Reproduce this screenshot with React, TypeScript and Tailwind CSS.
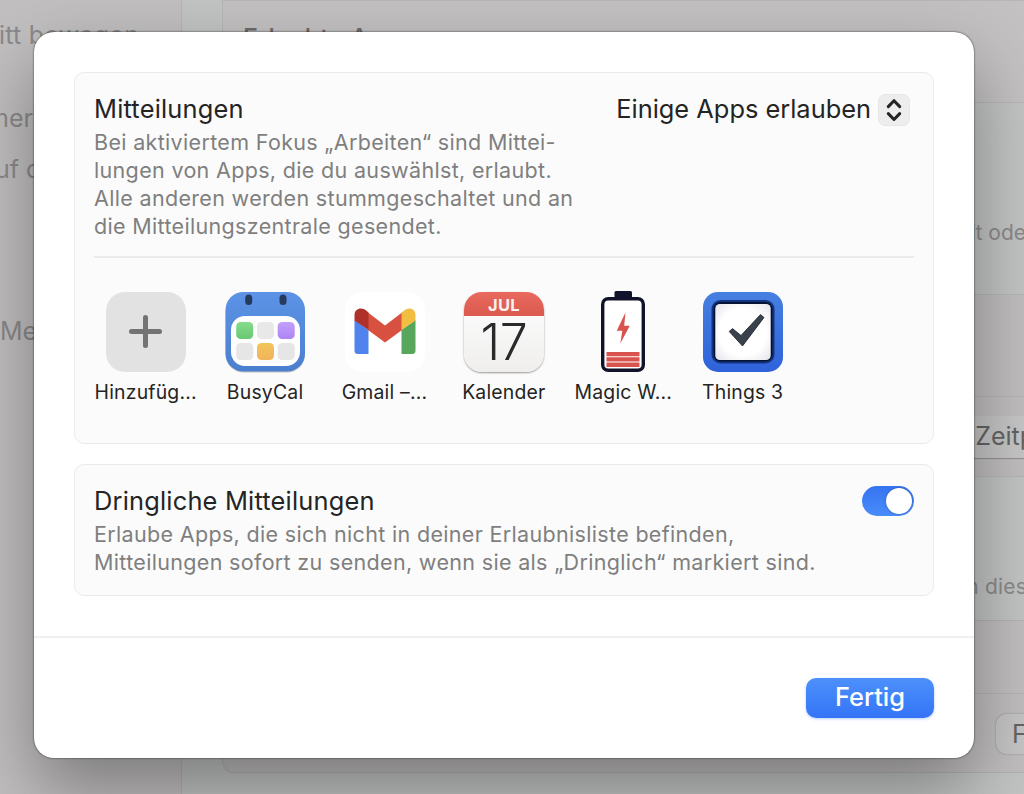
import React from "react";

function AddIcon() {
  return (
    <svg viewBox="0 0 80 80" className="h-20 w-20">
      <rect width="80" height="80" rx="19" fill="#e2e2e2" />
      <path d="M39.5 25.5v28M25.5 39.5h28" stroke="#737373" strokeWidth="5" strokeLinecap="round" />
    </svg>
  );
}

function BusyCalIcon() {
  return (
    <svg viewBox="0 0 80 80" className="h-20 w-20 overflow-visible">
      <defs>
        <linearGradient id="bc" x1="0" y1="0" x2="0" y2="1">
          <stop offset="0" stopColor="#5c93e6" />
          <stop offset="1" stopColor="#4b7fce" />
        </linearGradient>
        <linearGradient id="bg" x1="0" y1="0" x2="0" y2="1">
          <stop offset="0" stopColor="#85dc8b" />
          <stop offset="1" stopColor="#68c873" />
        </linearGradient>
        <linearGradient id="bp" x1="0" y1="0" x2="0" y2="1">
          <stop offset="0" stopColor="#c2a0fb" />
          <stop offset="1" stopColor="#ad84f4" />
        </linearGradient>
        <linearGradient id="bo" x1="0" y1="0" x2="0" y2="1">
          <stop offset="0" stopColor="#f2c558" />
          <stop offset="1" stopColor="#f0b45c" />
        </linearGradient>
      </defs>
      <rect x="0.5" y="1.5" width="79.500" height="79" rx="18" fill="#000" opacity="0.22" />
      <rect x="0.5" y="0" width="79.500" height="79.500" rx="18" fill="url(#bc)" />
      <rect x="20.2" y="2.500" width="7" height="10.500" rx="3.500" fill="#263a5e" />
      <rect x="54.500" y="2.500" width="7" height="10.500" rx="3.500" fill="#263a5e" />
      <rect x="6" y="24" width="69" height="50" rx="14" fill="#fdfdfd" />
      <rect x="11.200" y="30" width="17" height="17" rx="4.500" fill="url(#bg)" />
      <rect x="32" y="30" width="17" height="17" rx="4.500" fill="#e8e8e8" />
      <rect x="52.700" y="30" width="17" height="17" rx="4.500" fill="url(#bp)" />
      <rect x="11.200" y="51" width="17" height="17" rx="4.500" fill="#e6e6e6" />
      <rect x="32" y="51" width="17" height="17" rx="4.500" fill="url(#bo)" />
      <rect x="52.700" y="51" width="17" height="17" rx="4.500" fill="#e6e6e6" />
    </svg>
  );
}

function GmailIcon() {
  return (
    <svg viewBox="-1 0 80 80" className="h-20 w-20 overflow-visible">
      <rect width="80" height="80" rx="18" fill="#fff" />
      <path d="M9.500 28v30.500a3.500 3.500 0 0 0 3.500 3.500H23.500V38z" fill="#5083ee" />
      <path d="M70.500 28v30.500a3.500 3.500 0 0 1-3.500 3.500H56.500V38z" fill="#58a55c" />
      <path d="M23 20.500L40 33.500L57 20.500V38L40 50.500L23 38z" fill="#d85140" />
      <path d="M9.500 28.500V23C9.500 16.200 17 14.500 21.500 18.800L23.500 20.600V38z" fill="#b0302a" />
      <path d="M70.500 28.500V23C70.500 16.200 63.500 14.500 59 18.800L56.500 20.600V38z" fill="#f1be42" />
    </svg>
  );
}

function CalendarIcon() {
  return (
    <div className="flex h-20 w-20 flex-col overflow-hidden rounded-[18px] bg-linear-to-b from-white to-[#efeeed] shadow-[0_1px_2px_rgba(0,0,0,0.4)]">
      <div className="flex h-6 items-center justify-center bg-linear-to-b from-[#e8695d] to-[#dc5a4f] pt-0.5 text-[16.5px] leading-none font-bold tracking-[0.2px] text-[#f7f1f0]">
        JUL
      </div>
      <div className="flex flex-1 items-center justify-center pb-1 text-[50px] leading-[50px] font-light tracking-[-0.5px] text-[#2a2a2a]">
        17
      </div>
    </div>
  );
}

function BatteryIcon() {
  return (
    <svg viewBox="0 0 80 80" className="h-20 w-20 overflow-visible">
      <rect x="31.500" y="-1" width="17.500" height="9" rx="1.500" fill="#10132a" />
      <rect x="19.700" y="6.700" width="40.600" height="71.600" rx="5.500" fill="#fff" stroke="#10132a" strokeWidth="3.400" />
      <path d="M42.500 20.500L33.700 38.800H39.300L37.300 51.500L46.800 33.800H41.200z" fill="#d9534f" />
      <path d="M23.500 60h33v4.300h-33zM23.500 65.300h33v4.300h-33zM23.500 70.600h33v4.300h-33z" fill="#d9534f" />
    </svg>
  );
}

function ThingsIcon() {
  return (
    <svg viewBox="0 0 80 80" className="h-20 w-20">
      <defs>
        <linearGradient id="th" x1="0" y1="0" x2="0" y2="1">
          <stop offset="0" stopColor="#467fe0" />
          <stop offset="1" stopColor="#2f62da" />
        </linearGradient>
        <radialGradient id="tw" cx=".5" cy=".5" r=".7">
          <stop offset="0.600" stopColor="#fff" />
          <stop offset="1" stopColor="#e4e5ec" />
        </radialGradient>
      </defs>
      <rect width="80" height="80" rx="15" fill="url(#th)" />
      <rect x="8.500" y="8" width="63" height="63.500" rx="9" fill="#12337f" />
      <rect x="10.500" y="10" width="59" height="59.500" rx="7" fill="#071334" />
      <rect x="12.300" y="12" width="55.400" height="56" rx="4.500" fill="url(#tw)" />
      <path d="M26.200 39.500L29.500 36.600L38 43.500L57.500 22.500L61 25.500L39.500 54z" fill="#39414d" stroke="#1a2029" strokeWidth="0.800" strokeLinejoin="round" />
    </svg>
  );
}

const apps = [
  { label: "Hinzufüg...", icon: <AddIcon /> },
  { label: "BusyCal", icon: <BusyCalIcon /> },
  { label: "Gmail –...", icon: <GmailIcon /> },
  { label: "Kalender", icon: <CalendarIcon /> },
  { label: "Magic W...", icon: <BatteryIcon /> },
  { label: "Things 3", icon: <ThingsIcon /> },
];

function Backdrop() {
  return (
    <div className="flex h-full w-full text-[25px] leading-[30px] text-[#8b8989]">
      <div className="flex w-[182px] shrink-0 flex-col overflow-hidden border-r border-[#b4b5b5] bg-[#c1bfc0] whitespace-nowrap">
        <div className="-ml-[57px] pt-5 tracking-[0.25px]">Schritt bewegen</div>
        <div className="mt-[53px] flex w-[33px] justify-end">Immer</div>
        <div className="mt-[21px] -ml-[19px]">auf dem</div>
        <div className="mt-[132px]">Menü</div>
      </div>
      <div className="flex flex-1 flex-col overflow-hidden bg-[#c2c3c3] pl-10 whitespace-nowrap">
        <div className="h-[103px] border-t border-b border-l border-[#b7b6b6] bg-[#c3c1c2] pt-[22px] pl-5 font-medium tracking-[0.2px] text-[#6d6b6b]">
          Erlaubte Apps
        </div>
        <div className="flex h-[191px] items-center justify-end pt-[69px] text-[21px]">
          <span className="-mr-[2px]">Mit ode</span>
        </div>
        <div className="flex h-[183px] flex-col border-t border-b border-l border-[#b6b5b5] bg-[#c0bebf]">
          <div className="h-[102px] border-b border-[#b6b4b5]" />
          <div className="mt-[19px] flex h-[42px] items-center self-end rounded-l-[10px] bg-[#c6c6c6] pb-0.5 pl-4 text-[#656464] shadow-[0_1px_1px_rgba(0,0,0,0.25)]">
            <span className="-mr-[11px]">Zeitp</span>
          </div>
        </div>
        <div className="flex h-[143px] items-end justify-end pb-[18px] text-[21px]">
          <span className="-mr-[3px] tracking-[0.2px]">in dies</span>
        </div>
        <div className="flex h-[153px] flex-col rounded-bl-xl border-t border-b border-l border-[#b3b1b2] bg-[#c0bebf]">
          <div className="h-[73px] border-b border-[#b4b2b3]" />
          <div className="mt-5 -mr-8 flex h-10 w-[60px] items-center self-end rounded-[10px] bg-[#c5c5c5] pl-4 text-[#656464] shadow-[0_0_2px_rgba(0,0,0,0.3)]">
            Fokus
          </div>
        </div>
      </div>
    </div>
  );
}

export default function App() {
  return (
    <div className="relative h-[794px] w-[1024px] overflow-hidden bg-[#c1bfc0] font-['Inter',sans-serif]">
      <Backdrop />
      <div
        role="dialog"
        className="absolute top-[32px] left-[34px] flex h-[726px] w-[940px] flex-col rounded-[20px] bg-white text-[#242424] shadow-[0_0_2px_rgba(0,0,0,0.8),0_32px_72px_rgba(0,0,0,0.36)]"
      >
        <div className="flex h-[606px] flex-col gap-5 border-b-2 border-[#f0f0f0] p-10">
          <section className="h-[372px] rounded-[10px] border border-[#ebebeb] bg-[#fbfbfb] px-[19px]">
            <div className="flex h-[185px] justify-between border-b-2 border-[#ebebeb] pt-5">
              <div>
                <h2 className="text-[25.4px] leading-8 tracking-[0.2px]">Mitteilungen</h2>
                <p className="mt-[3px] text-[21.5px] leading-7 tracking-[0.33px] whitespace-nowrap text-[#7f7f7f]">
                  Bei aktiviertem Fokus „Arbeiten“ sind Mittei-
                  <br />
                  lungen von Apps, die du auswählst, erlaubt.
                  <br />
                  Alle anderen werden stummgeschaltet und an
                  <br />
                  die Mitteilungszentrale gesendet.
                </p>
              </div>
              <button className="mt-px mr-1 flex h-8 items-center gap-[7px] text-[25.4px] whitespace-nowrap">
                <span className="pb-0.5">Einige Apps erlauben</span>
                <span className="flex h-8 w-8 items-center justify-center rounded-[7px] border border-[#e7e7e7] bg-[#ededed]">
                  <svg viewBox="0 0 32 32" className="h-8 w-8 shrink-0" fill="none" stroke="#242424" strokeWidth="3" strokeLinecap="round" strokeLinejoin="round">
                    <path d="M10.300 12.600L16 6.700L21.700 12.600M10.300 19.600L16 25.500L21.700 19.600" />
                  </svg>
                </span>
              </button>
            </div>
            <div className="-ml-2 flex pt-[34px]">
              {apps.map((app) => (
                <div key={app.label} className="flex w-[119.4px] flex-col items-center">
                  {app.icon}
                  <span className="mt-2 text-[19.4px] leading-6 tracking-[0.2px] whitespace-nowrap">{app.label}</span>
                </div>
              ))}
            </div>
          </section>
          <section className="flex h-[132px] justify-between rounded-[10px] border border-[#ebebeb] bg-[#fbfbfb] px-[19px] pt-5">
            <div>
              <h2 className="text-[25.4px] leading-8 tracking-[0.2px]">Dringliche Mitteilungen</h2>
              <p className="mt-[3px] text-[21.5px] leading-7 tracking-[0.33px] whitespace-nowrap text-[#7f7f7f]">
                Erlaube Apps, die sich nicht in deiner Erlaubnisliste befinden,
                <br />
                Mitteilungen sofort zu senden, wenn sie als „Dringlich“ markiert sind.
              </p>
            </div>
            <div className="mt-px flex h-[30px] w-[52px] items-center justify-end rounded-full bg-linear-to-b from-[#3574f0] to-[#4a8bfa] pr-[2px]">
              <span className="h-[26px] w-[26px] rounded-full bg-white shadow-[0_0_2px_rgba(0,0,0,0.4)]" />
            </div>
          </section>
        </div>
        <div className="flex justify-end px-10 pt-10">
          <button className="h-10 w-32 rounded-[10px] bg-linear-to-b from-[#4d90fb] to-[#3474f6] pb-0.5 text-[25.4px] leading-[38px] font-medium text-white shadow-[0_1px_3px_rgba(52,116,246,0.35)]">
            Fertig
          </button>
        </div>
      </div>
    </div>
  );
}
